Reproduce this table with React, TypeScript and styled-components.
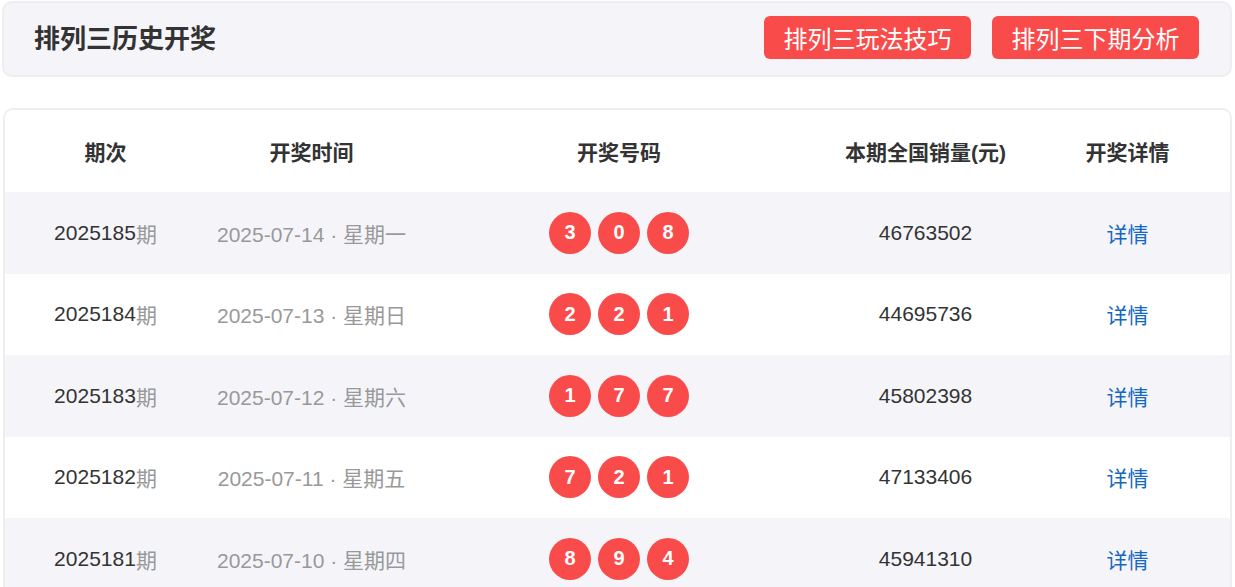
import { createGlobalStyle, styled } from "styled-components";

const GlobalStyle = createGlobalStyle`
  body {
    margin: 0;
    background: #fff;
    font-family: "Liberation Sans", "Noto Sans CJK SC", sans-serif;
    color: #333;
  }
`;

const Page = styled.div`
  padding: 1px 3px 0 2px;
  display: flex;
  flex-direction: column;
  gap: 31px;
`;

const TopBar = styled.div`
  height: 72px;
  border: 2px solid #eeeef0;
  border-radius: 10px;
  background: #f5f5f9;
  display: flex;
  align-items: center;
  padding: 0 31px 4px 30px;
  box-sizing: border-box;
  height: 76px;
`;

const Title = styled.h1`
  flex: 1;
  margin: 0;
  font-family: "Noto Sans CJK SC", sans-serif;
  font-size: 26px;
  font-weight: 700;
  color: #333;
  line-height: 1;
`;

const Actions = styled.div`
  display: flex;
  gap: 21px;
`;

const RedButton = styled.a`
  width: 207px;
  height: 43px;
  border-radius: 6px;
  background: #fa4b4b;
  color: #fff;
  font-family: "Noto Sans CJK SC", sans-serif;
  font-size: 24px;
  display: flex;
  align-items: center;
  justify-content: center;
`;

const Card = styled.div`
  margin-left: 1px;
  border: 2px solid #eeeef0;
  border-bottom: none;
  border-radius: 10px 10px 0 0;
  overflow: hidden;
`;

const Row = styled.div<{ $head?: boolean; $shade?: boolean }>`
  display: grid;
  grid-template-columns: 201px 211px 404px 209px 195px;
  align-items: center;
  height: ${(p) => (p.$head ? "82px" : "81.5px")};
  background: ${(p) => (p.$shade ? "#f5f5f9" : "#fff")};
  font-size: 21px;
  font-weight: ${(p) => (p.$head ? 700 : 400)};
`;

const Cell = styled.div`
  display: flex;
  justify-content: center;
  align-items: center;
`;

const Muted = styled.span`
  color: #999;
`;

const Balls = styled.div`
  display: flex;
  gap: 7px;
  justify-content: center;
`;

const Ball = styled.span`
  width: 42px;
  height: 42px;
  border-radius: 50%;
  background: #fa4b4b;
  color: #fff;
  font-weight: 700;
  font-size: 20px;
  display: flex;
  align-items: center;
  justify-content: center;
`;

const DetailLink = styled.a`
  color: #1568c0;
`;

const draws = [
  { issue: "2025185", date: "2025-07-14", week: "星期一", nums: [3, 0, 8], sales: "46763502" },
  { issue: "2025184", date: "2025-07-13", week: "星期日", nums: [2, 2, 1], sales: "44695736" },
  { issue: "2025183", date: "2025-07-12", week: "星期六", nums: [1, 7, 7], sales: "45802398" },
  { issue: "2025182", date: "2025-07-11", week: "星期五", nums: [7, 2, 1], sales: "47133406" },
  { issue: "2025181", date: "2025-07-10", week: "星期四", nums: [8, 9, 4], sales: "45941310" },
];

export default function App() {
  return (
    <>
      <GlobalStyle />
      <Page>
        <TopBar>
          <Title>排列三历史开奖</Title>
          <Actions>
            <RedButton>排列三玩法技巧</RedButton>
            <RedButton>排列三下期分析</RedButton>
          </Actions>
        </TopBar>
        <Card>
          <Row $head>
            <Cell>期次</Cell>
            <Cell>开奖时间</Cell>
            <Cell>开奖号码</Cell>
            <Cell>本期全国销量(元)</Cell>
            <Cell>开奖详情</Cell>
          </Row>
          {draws.map((d, i) => (
            <Row key={d.issue} $shade={i % 2 === 0}>
              <Cell>
                {d.issue}
                <Muted>期</Muted>
              </Cell>
              <Cell>
                <Muted>
                  {d.date} · {d.week}
                </Muted>
              </Cell>
              <Cell>
                <Balls>
                  {d.nums.map((n, j) => (
                    <Ball key={j}>{n}</Ball>
                  ))}
                </Balls>
              </Cell>
              <Cell>{d.sales}</Cell>
              <Cell>
                <DetailLink>详情</DetailLink>
              </Cell>
            </Row>
          ))}
        </Card>
      </Page>
    </>
  );
}
